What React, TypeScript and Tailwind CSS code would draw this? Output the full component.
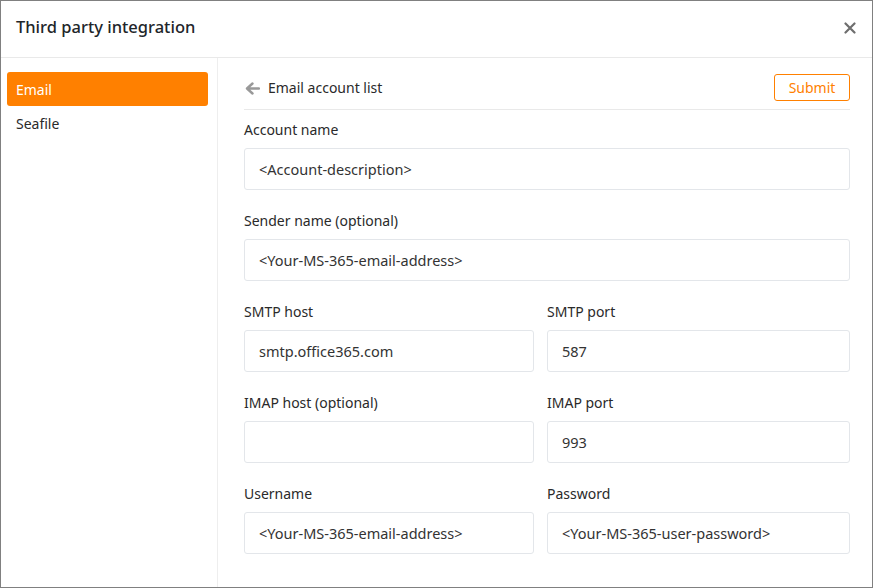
const fieldInput =
  "w-full h-[42px] border border-[#e3e6ea] rounded-[3px] px-[14px] pt-[2px] text-[14.5px] text-[#333] bg-white outline-none";

function Field({ label, value }: { label: string; value: string }) {
  return (
    <div className="min-w-0 mb-[20px]">
      <label className="block text-[14px] leading-[21px] text-[#2a2a2a] mb-[8px]">{label}</label>
      <div className={`${fieldInput} flex items-center`}>{value}</div>
    </div>
  );
}

export default function App() {
  return (
    <div
      className="w-[873px] h-[588px] border border-[#808080] bg-white flex flex-col overflow-hidden"
      style={{ fontFamily: '"Noto Sans", "Open Sans", sans-serif' }}
    >
      <div className="h-[57px] shrink-0 border-b border-[#e9e9e9] flex items-center justify-between pl-[15px] pr-[16px]">
        <h1 className="text-[16.5px] font-medium text-[#212529] -mt-[3px]">Third party integration</h1>
        <svg width="12" height="12" viewBox="0 0 12 12" className="-mt-[3px]">
          <path d="M1.5 1.5 L10.5 10.5 M10.5 1.5 L1.5 10.5" stroke="#6e6e6e" strokeWidth="2.2" strokeLinecap="round" />
        </svg>
      </div>

      <div className="flex flex-1 min-h-0">
        <div className="w-[217px] shrink-0 border-r border-[#eeeeee] pt-[14px] pl-[6px] pr-[9px]">
          <div className="h-[34px] rounded-[3px] bg-[#ff8000] text-white text-[14px] flex items-center px-[9px]">
            Email
          </div>
          <div className="h-[34px] text-[14px] text-[#2a2a2a] flex items-center px-[9px]">Seafile</div>
        </div>

        <div className="flex-1 pl-[26px] pr-[22px] pt-[16px]">
          <div className="flex items-center justify-between h-[27px] mb-[8px]">
            <div className="flex items-center gap-[8px] text-[14px] text-[#2a2a2a]">
              <svg width="15" height="13" viewBox="0 0 15 13" className="ml-[1px] mt-[1px]">
                <path
                  d="M14 6.5 H2.5 M7.5 1.5 L2 6.5 L7.5 11.5"
                  stroke="#999"
                  strokeWidth="2.4"
                  fill="none"
                  strokeLinecap="round"
                  strokeLinejoin="round"
                />
              </svg>
              <span>Email account list</span>
            </div>
            <button className="h-[27px] w-[76px] border border-[#ff8000] rounded-[3px] text-[#ff8000] text-[14px]">
              Submit
            </button>
          </div>
          <div className="border-t border-[#e9e9e9] pt-[9px]">
            <Field label="Account name" value="<Account-description>" />
            <Field label="Sender name (optional)" value="<Your-MS-365-email-address>" />
            <div className="grid grid-cols-[290px_1fr] gap-x-[13px]">
              <Field label="SMTP host" value="smtp.office365.com" />
              <Field label="SMTP port" value="587" />
              <Field label="IMAP host (optional)" value="" />
              <Field label="IMAP port" value="993" />
              <Field label="Username" value="<Your-MS-365-email-address>" />
              <Field label="Password" value="<Your-MS-365-user-password>" />
            </div>
          </div>
        </div>
      </div>
    </div>
  );
}
